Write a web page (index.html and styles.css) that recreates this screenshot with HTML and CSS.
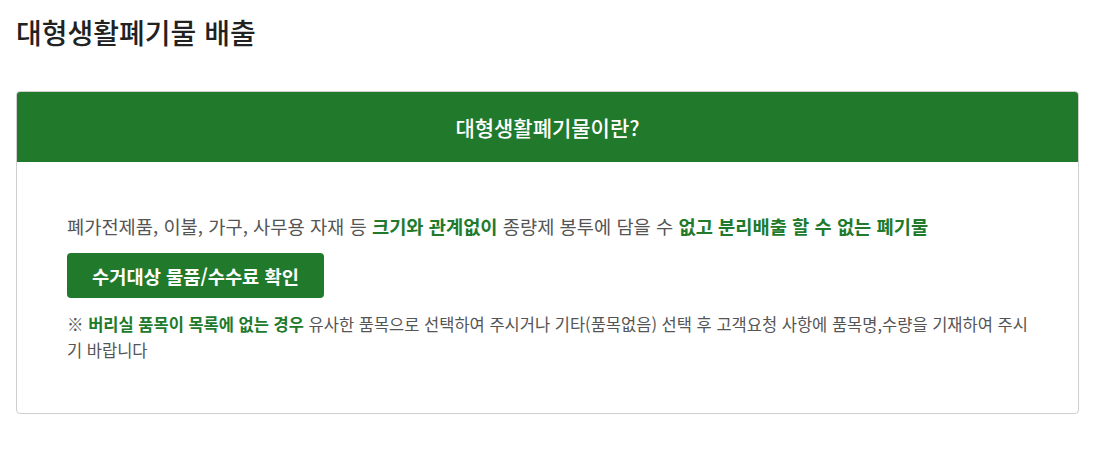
FILE: index.html
```html
<!DOCTYPE html>
<html lang="ko">
<head>
  <meta charset="utf-8">
  <title>대형생활폐기물 배출</title>
  <link rel="stylesheet" href="styles.css">
</head>
<body>
  <h1 class="page-title">대형생활폐기물 배출</h1>

  <div class="info-card">
    <div class="info-head">대형생활폐기물이란?</div>
    <div class="info-body">
      <p class="desc">폐가전제품, 이불, 가구, 사무용 자재 등 <strong>크기와 관계없이</strong> 종량제 봉투에 담을 수 <strong>없고 분리배출 할 수 없는 폐기물</strong></p>
      <a class="btn-check" href="#">수거대상 물품/수수료 확인</a>
      <p class="note">※ <strong>버리실 품목이 목록에 없는 경우</strong> 유사한 품목으로 선택하여 주시거나 기타(품목없음) 선택 후 고객요청 사항에 품목명,수량을 기재하여 주시기 바랍니다</p>
    </div>
  </div>
</body>
</html>
```

FILE: styles.css
```css
body {
  margin: 0;
  padding: 0 38px 0 16px;
  font-family: "Noto Sans CJK KR", "Noto Sans", sans-serif;
  color: #555;
  background: #fff;
}

.page-title {
  margin: 0;
  padding-top: 13px;
  font-size: 28px;
  font-weight: 500;
  line-height: 38px;
  color: #222;
}

.info-card {
  margin-top: 40px;
  border: 1px solid #cfcfcf;
  border-radius: 4px;
  overflow: hidden;
}

.info-head {
  background-color: #217a2c; /* 헤더 녹색 */
  color: #fff;
  text-align: center;
  font-size: 21px;
  font-weight: 500;
  height: 70px;
  line-height: 70px;
}

.info-body {
  padding: 50px 50px 50px;
}

.info-body strong {
  color: #217a2c;
  font-weight: 700;
}

.desc {
  margin: 0;
  font-size: 18.7px;
  line-height: 28px;
}

.btn-check {
  display: inline-block;
  margin-top: 13px;
  width: 257px;
  height: 45px;
  line-height: 45px;
  text-align: center;
  background-color: #217a2c;
  color: #fff;
  font-size: 18.7px;
  font-weight: 700;
  border-radius: 4px;
  text-decoration: none;
}

.note {
  margin: 13px 0 0;
  font-size: 16.5px;
  line-height: 26px;
}
```
